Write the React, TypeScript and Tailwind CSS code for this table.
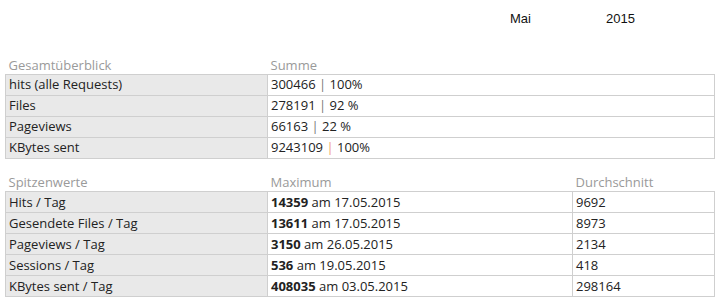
import React from 'react'

const overview = [
  { label: 'hits (alle Requests)', value: '300466', pct: '100%' },
  { label: 'Files', value: '278191', pct: '92 %' },
  { label: 'Pageviews', value: '66163', pct: '22 %' },
  { label: 'KBytes sent', value: '9243109', pct: '100%', accent: true },
]

const peaks = [
  { label: 'Hits / Tag', max: '14359', date: '17.05.2015', avg: '9692' },
  { label: 'Gesendete Files / Tag', max: '13611', date: '17.05.2015', avg: '8973' },
  { label: 'Pageviews / Tag', max: '3150', date: '26.05.2015', avg: '2134' },
  { label: 'Sessions / Tag', max: '536', date: '19.05.2015', avg: '418' },
  { label: 'KBytes sent / Tag', max: '408035', date: '03.05.2015', avg: '298164' },
]

const labelCell = 'h-[21px] border border-[#cfcfcf] bg-[#e9e9e9] pl-[3px] py-0 align-middle'
const valueCell = 'h-[21px] border border-[#cfcfcf] bg-white pl-[3px] py-0 align-middle'
const headCell = 'h-[16px] pl-[3px] pb-[2px] pt-0 text-left font-normal text-[#9a9a9a] align-bottom'

export default function App() {
  return (
    <div className="w-[720px] h-[301px] bg-white text-[13px] leading-none text-[#222] font-['Open_Sans',sans-serif] overflow-hidden">
      <div className="flex h-[36px] items-center pl-[510px] text-[#111] font-['Liberation_Sans',sans-serif] text-[13px]">
        <span className="w-[96px]">Mai</span>
        <span>2015</span>
      </div>

      <div className="px-[5px] pt-[22px]">
        <table className="w-[710px] border-collapse">
          <thead>
            <tr>
              <th className={`${headCell} w-[262px]`}>Gesamtüberblick</th>
              <th className={headCell}>Summe</th>
            </tr>
          </thead>
          <tbody>
            {overview.map(row => (
              <tr key={row.label}>
                <td className={labelCell}>{row.label}</td>
                <td className={valueCell}>
                  {row.value}{' '}
                  <span className={row.accent ? 'text-[#f0a070]' : 'text-[#777]'}>|</span>{' '}
                  {row.pct}
                </td>
              </tr>
            ))}
          </tbody>
        </table>

        <table className="mt-[17px] w-[710px] border-collapse">
          <thead>
            <tr>
              <th className={`${headCell} w-[262px]`}>Spitzenwerte</th>
              <th className={`${headCell} w-[305px]`}>Maximum</th>
              <th className={headCell}>Durchschnitt</th>
            </tr>
          </thead>
          <tbody>
            {peaks.map(row => (
              <tr key={row.label}>
                <td className={labelCell}>{row.label}</td>
                <td className={valueCell}>
                  <b className="font-bold">{row.max}</b> am {row.date}
                </td>
                <td className={valueCell}>{row.avg}</td>
              </tr>
            ))}
          </tbody>
        </table>
      </div>
    </div>
  )
}
